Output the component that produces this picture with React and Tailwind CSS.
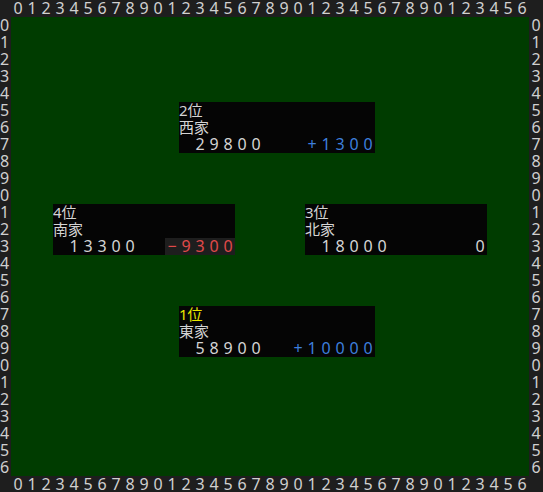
import React from 'react';

const COLS = '0123456789012345678901234567890123456'.split('');
const ROWS = '012345678901234567890123456'.split('');

const FONT = { fontFamily: '"Noto Sans", "Noto Sans CJK JP", sans-serif' };

const Cells = ({ text, className = '' }) => (
  <>
    {text.split('').map((ch, i) => (
      <span key={i} className={`w-[14px] text-center ${className}`}>
        {ch === ' ' ? '\u00a0' : ch}
      </span>
    ))}
  </>
);

const players = [
  { rank: '2位', wind: '西家', score: ' 29800', gap: '   ', delta: '+1300', kind: 'plus', pos: 'col-[13/span_14] row-[6/span_3]' },
  { rank: '4位', wind: '南家', score: ' 13300', gap: '  ', delta: '-9300', kind: 'minus', pos: 'col-[4/span_13] row-[12/span_3]' },
  { rank: '3位', wind: '北家', score: ' 18000', gap: '  ', delta: '    0', kind: 'zero', pos: 'col-[22/span_13] row-[12/span_3]' },
  { rank: '1位', wind: '東家', score: ' 58900', gap: '  ', delta: '+10000', kind: 'plus', pos: 'col-[13/span_14] row-[18/span_3]', top: true },
];

const PlayerBox = ({ p }) => (
  <div className={`${p.pos} bg-[#050505] flex flex-col leading-[17px] text-[#d4d4d4] overflow-hidden`}>
    <div className={`h-[17px] text-[15px] ${p.top ? 'text-[#e8e800]' : ''}`}>{p.rank}</div>
    <div className="h-[17px] text-[15px]">{p.wind}</div>
    <div className="h-[17px] flex text-[16px]">
      <Cells text={p.score} />
      <Cells text={p.gap} />
      {p.kind === 'minus' ? (
        <span className="flex bg-[#1e1e1e]">
          <Cells text={p.delta.replace('-', '−')} className="text-[#e04a4a]" />
        </span>
      ) : (
        <Cells text={p.delta} className={p.kind === 'plus' ? 'text-[#3d7fdc]' : ''} />
      )}
    </div>
  </div>
);

const App = () => {
  return (
    <div className="w-[543px] h-[492px] bg-[#1e1e1e] flex flex-col text-[16px] leading-[17px] text-[#d0d0d0] overflow-hidden" style={FONT}>
      <div className="h-[17px] flex pl-[11px] leading-[16px]">
        <Cells text={COLS.join('')} />
      </div>
      <div className="flex h-[459px]">
        <div className="w-[11px] flex flex-col">
          {ROWS.map((r, i) => (
            <span key={i} className="h-[17px] leading-[17px]">{r}</span>
          ))}
        </div>
        <div className="w-[518px] bg-[#003c00] grid grid-cols-[repeat(37,14px)] grid-rows-[repeat(27,17px)]">
          {players.map((p, i) => (
            <PlayerBox key={i} p={p} />
          ))}
        </div>
        <div className="w-[14px] flex flex-col">
          {ROWS.map((r, i) => (
            <span key={i} className="h-[17px] leading-[17px] text-center">{r}</span>
          ))}
        </div>
      </div>
      <div className="h-[16px] flex pl-[11px] leading-[16px]">
        <Cells text={COLS.join('')} />
      </div>
    </div>
  );
};

export default App;
